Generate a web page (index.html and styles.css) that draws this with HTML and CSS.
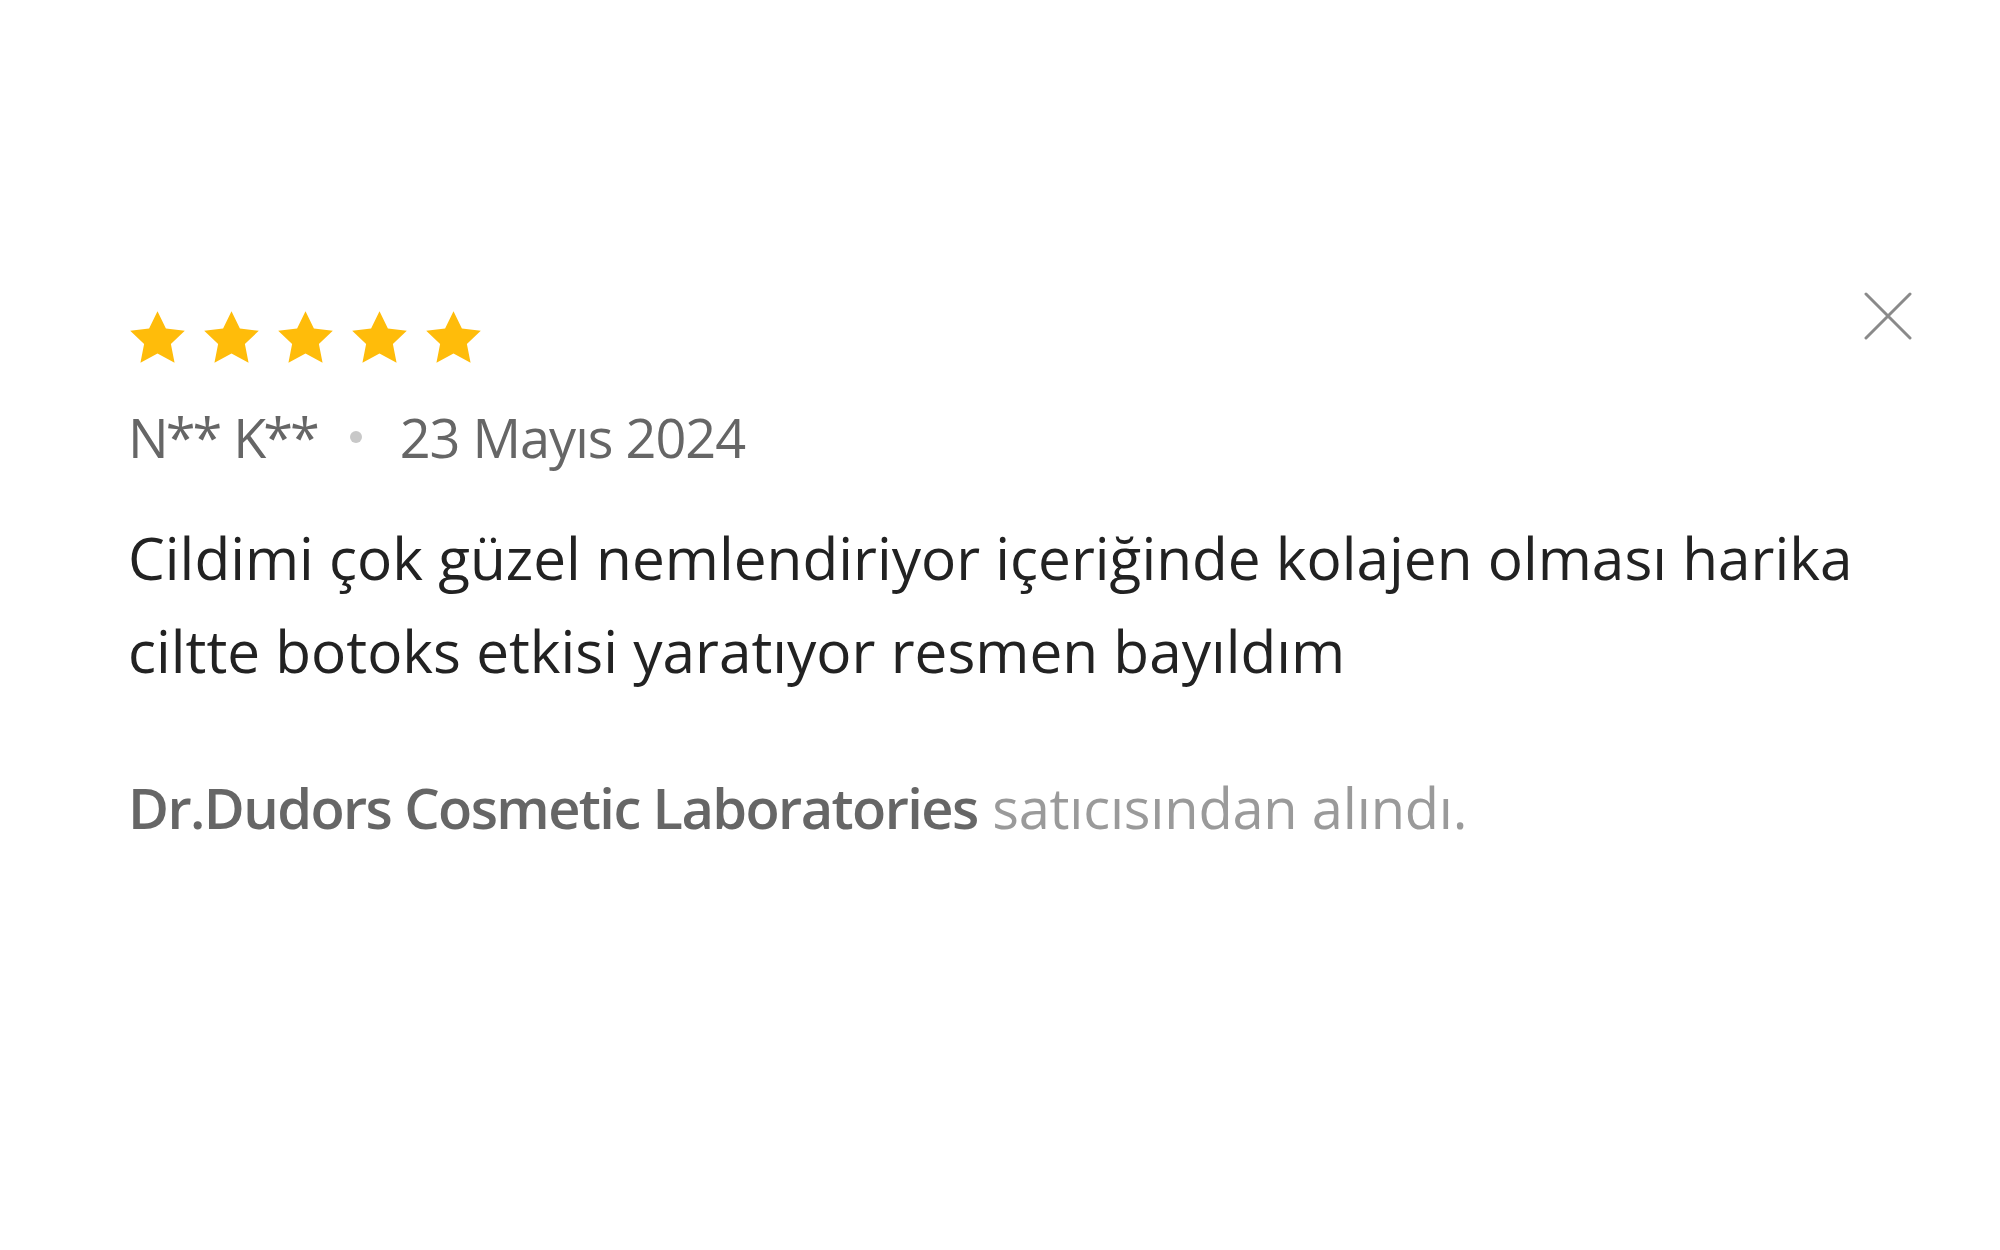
FILE: index.html
```html
<!DOCTYPE html>
<html lang="tr">
<head>
<meta charset="utf-8">
<title>Değerlendirme</title>
<link rel="stylesheet" href="styles.css">
</head>
<body>
<div class="review">
  <div class="head">
    <div class="stars">
      <svg class="star" viewBox="0 0 24 24"><path d="M12 1.2l3.2 6.6 7.2.9-5.3 5 1.4 7.2L12 17.3l-6.5 3.6 1.4-7.2-5.3-5 7.2-.9z"/></svg>
      <svg class="star" viewBox="0 0 24 24"><path d="M12 1.2l3.2 6.6 7.2.9-5.3 5 1.4 7.2L12 17.3l-6.5 3.6 1.4-7.2-5.3-5 7.2-.9z"/></svg>
      <svg class="star" viewBox="0 0 24 24"><path d="M12 1.2l3.2 6.6 7.2.9-5.3 5 1.4 7.2L12 17.3l-6.5 3.6 1.4-7.2-5.3-5 7.2-.9z"/></svg>
      <svg class="star" viewBox="0 0 24 24"><path d="M12 1.2l3.2 6.6 7.2.9-5.3 5 1.4 7.2L12 17.3l-6.5 3.6 1.4-7.2-5.3-5 7.2-.9z"/></svg>
      <svg class="star" viewBox="0 0 24 24"><path d="M12 1.2l3.2 6.6 7.2.9-5.3 5 1.4 7.2L12 17.3l-6.5 3.6 1.4-7.2-5.3-5 7.2-.9z"/></svg>
    </div>
    <button class="close" aria-label="Kapat">
      <svg viewBox="0 0 48 48"><path d="M2 2L46 46M46 2L2 46"/></svg>
    </button>
  </div>
  <div class="meta">
    <span class="name">N** K**</span>
    <span class="dot"></span>
    <span class="date">23 Mayıs 2024</span>
  </div>
  <p class="text">Cildimi çok güzel nemlendiriyor içeriğinde kolajen olması harika ciltte botoks etkisi yaratıyor resmen bayıldım</p>
  <p class="seller"><span class="seller-name">Dr.Dudors Cosmetic Laboratories</span> <span class="seller-note">satıcısından alındı.</span></p>
</div>
</body>
</html>
```
FILE: styles.css
```css
html, body {
  margin: 0;
  padding: 0;
  background: #ffffff;
}
body {
  font-family: "Open Sans", Lato, "Liberation Sans", sans-serif;
  font-variant-ligatures: none;
  color: #222222;
}
.review {
  padding: 292px 88px 0 128px;
}
.head {
  display: flex;
  justify-content: space-between;
  align-items: flex-start;
}
.stars {
  display: flex;
  gap: 11px;
  padding-top: 16px;
  margin-left: -2px;
}
.star {
  width: 63px;
  height: 63px;
  fill: #ffbc0a;
  display: block;
}
.close {
  background: none;
  border: 0;
  padding: 0;
  width: 48px;
  height: 48px;
  cursor: pointer;
}
.close svg {
  display: block;
  width: 48px;
  height: 48px;
  stroke: #8a8a8a;
  stroke-width: 3;
  stroke-linecap: round;
  fill: none;
}
.meta {
  display: flex;
  align-items: center;
  margin-top: 28px;
  font-size: 54px;
  line-height: 76px;
  letter-spacing: -1px;
  color: #666666;
}
.name {
  letter-spacing: -3px;
  word-spacing: 3px;
}
.dot {
  width: 12px;
  height: 12px;
  border-radius: 50%;
  background: #c8c8c8;
  margin: 0 38px 0 33px;
}
.text {
  margin: 36px 0 0;
  font-size: 58.5px;
  line-height: 93px;
  color: #222222;
}
.seller {
  margin: 75px 0 0;
  font-size: 56px;
  line-height: 70px;
}
.seller-name {
  font-weight: 600;
  letter-spacing: -1.6px;
  color: #666666;
}
.seller-note {
  letter-spacing: -0.2px;
  color: #9a9a9a;
}
```
